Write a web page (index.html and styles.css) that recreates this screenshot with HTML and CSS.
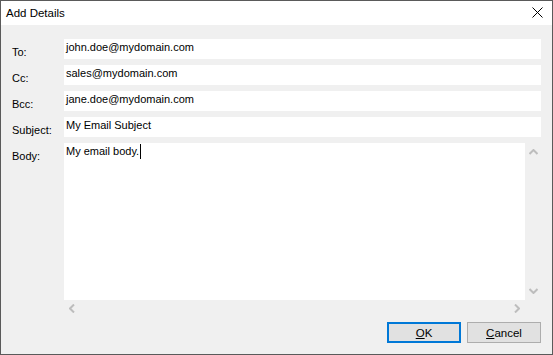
FILE: index.html
```html
<!DOCTYPE html>
<html>
<head>
    <title>Add Details</title>
    <meta name="viewport" content="width=device-width, initial-scale=1">
    <link rel="stylesheet" href="styles.css">
</head>
<body>
    <div class="window">
        <div class="titlebar">
            <span class="title">Add Details</span>
            <svg class="close" width="11" height="11" viewBox="0 0 11 11">
                <path d="M0.5 0.5 L10.5 10.5 M10.5 0.5 L0.5 10.5" stroke="#000" stroke-width="1" fill="none"/>
            </svg>
        </div>

        <div class="content">
            <div class="form">
                <label>To:</label>
                <div class="field">john.doe@mydomain.com</div>

                <label>Cc:</label>
                <div class="field">sales@mydomain.com</div>

                <label>Bcc:</label>
                <div class="field">jane.doe@mydomain.com</div>

                <label>Subject:</label>
                <div class="field">My Email Subject</div>

                <label>Body:</label>
                <div class="textarea">
                    <div class="text-area-main">
                        <div class="body-text">My email body.<span class="caret"></span></div>
                        <div class="vscroll">
                            <svg width="9" height="6" viewBox="0 0 9 6"><path d="M0.5 5 L4.5 1 L8.5 5" stroke="#bdbdbd" stroke-width="2" fill="none"/></svg>
                            <svg width="9" height="6" viewBox="0 0 9 6"><path d="M0.5 1 L4.5 5 L8.5 1" stroke="#bdbdbd" stroke-width="2" fill="none"/></svg>
                        </div>
                    </div>
                    <div class="hscroll">
                        <svg width="6" height="9" viewBox="0 0 6 9"><path d="M5 0.5 L1 4.5 L5 8.5" stroke="#bdbdbd" stroke-width="2" fill="none"/></svg>
                        <svg width="6" height="9" viewBox="0 0 6 9"><path d="M1 0.5 L5 4.5 L1 8.5" stroke="#bdbdbd" stroke-width="2" fill="none"/></svg>
                        <div class="corner"></div>
                    </div>
                </div>
            </div>

            <div class="buttons">
                <button class="btn default"><u>O</u>K</button>
                <button class="btn"><u>C</u>ancel</button>
            </div>
        </div>
    </div>
</body>
</html>
```

FILE: styles.css
```css
body {
    margin: 0;
    font-family: "Liberation Sans", Arial, sans-serif;
    font-size: 11px;
    color: #000;
    background: #f0f0f0;
}
.window {
    width: 553px;
    height: 355px;
    box-sizing: border-box;
    border: 1px solid #5a5a5a;
    background: #f0f0f0;
    display: flex;
    flex-direction: column;
}
.titlebar {
    height: 24px;
    background: #fff;
    display: flex;
    align-items: center;
    justify-content: space-between;
    padding: 0 9px 0 5px;
}
.title {
    font-size: 11.5px;
    margin-top: -1px;
}
.close {
    margin-top: -1px;
}
.content {
    flex: 1;
    padding: 14px 11px 11px 11px;
    display: flex;
    flex-direction: column;
}
.form {
    display: grid;
    grid-template-columns: 52px 1fr;
    grid-template-rows: 20px 20px 20px 20px 173px;
    row-gap: 6px;
}
.form label {
    padding-top: 6px;
    line-height: 14px;
}
.field {
    background: #fff;
    padding: 1px 2px 0 2px;
    line-height: 14px;
    white-space: nowrap;
}
.textarea {
    display: flex;
    flex-direction: column;
}
.text-area-main {
    flex: 1;
    display: flex;
}
.body-text {
    flex: 1;
    background: #fff;
    padding: 1px 2px 0 2px;
    line-height: 14px;
}
.caret {
    display: inline-block;
    width: 1px;
    height: 15px;
    background: #000;
    vertical-align: top;
    margin-left: 1px;
}
.vscroll {
    width: 16px;
    background: #f0f0f0;
    display: flex;
    flex-direction: column;
    justify-content: space-between;
    align-items: center;
    padding: 6px 0 6px 0;
}
.hscroll {
    height: 16px;
    display: flex;
    align-items: center;
    justify-content: space-between;
    padding-left: 5px;
}
.hscroll svg:nth-child(2) {
    margin-left: auto;
    margin-right: 5px;
}
.corner {
    width: 16px;
    height: 16px;
}
.buttons {
    margin-top: 6px;
    display: flex;
    justify-content: flex-end;
    gap: 6px;
}
.btn {
    width: 74px;
    height: 21px;
    box-sizing: border-box;
    background: #e1e1e1;
    border: 1px solid #adadad;
    font-family: "Liberation Sans", Arial, sans-serif;
    font-size: 11.5px;
    padding: 0;
    color: #000;
    line-height: 16px;
}
.btn.default {
    border: 2px solid #0078d7;
}
```
